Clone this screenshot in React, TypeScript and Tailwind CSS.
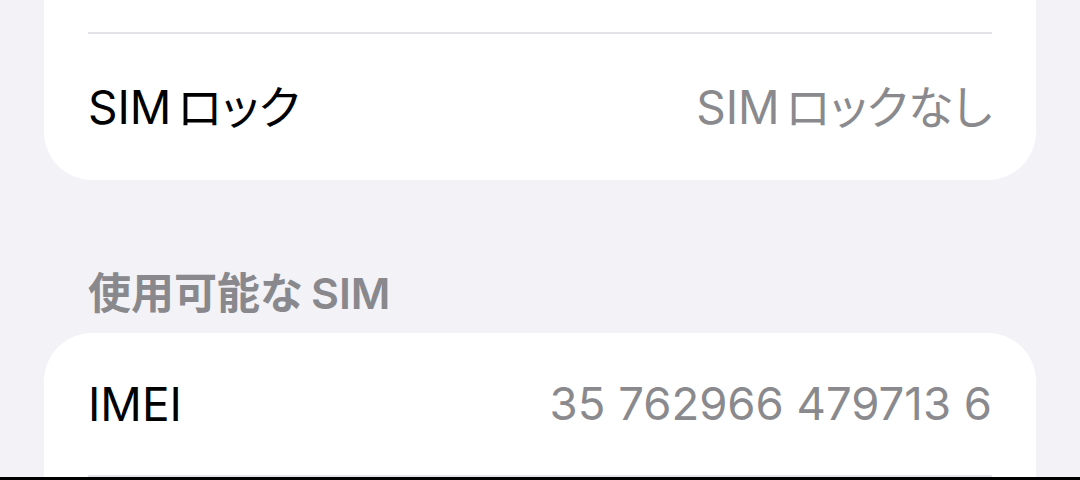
import React from 'react';

const font = { fontFamily: '"Inter", "Noto Sans CJK JP", sans-serif' };

const Row: React.FC<{ label: React.ReactNode; value: React.ReactNode; className?: string }> = ({ label, value, className }) => (
  <div className={`flex items-center justify-between px-[44px] ${className ?? ''}`}>
    <span className="text-[46px] text-black">{label}</span>
    <span className="text-[46px] text-[#8a8a8e]">{value}</span>
  </div>
);

// Japanese run with proportional kana widths, a small gap after the Latin part
const Jp: React.FC<{ children: React.ReactNode }> = ({ children }) => (
  <span className="ml-[6px] [font-feature-settings:'palt']">{children}</span>
);

export default function App() {
  return (
    <div className="w-[1080px] h-[480px] overflow-hidden bg-[#f2f2f7] flex flex-col" style={font}>
      <div className="mx-[44px] bg-white rounded-b-[48px] flex flex-col shrink-0">
        <div className="h-[32px]" />
        <div className="mx-[44px] h-[2px] bg-[#e3e3e8]" />
        <Row
          label={<>SIM<Jp>ロック</Jp></>}
          value={<>SIM<Jp>ロックなし</Jp></>}
          className="h-[146px]"
        />
      </div>
      <div className="h-[153px] shrink-0 flex items-end pl-[88px] pb-[18px]">
        <span className="text-[43px] font-semibold text-[#88888d] leading-none">
          使用可能な<span className="ml-[8px]">SIM</span>
        </span>
      </div>
      <div className="mx-[44px] bg-white rounded-t-[48px] flex flex-col flex-1">
        <Row label="IMEI" value={<span className="text-[45.5px]">35 762966 479713 6</span>} className="h-[142px] shrink-0" />
        <div className="mx-[44px] h-[2px] bg-[#e3e3e8]" />
      </div>
      <div className="h-[3px] bg-black shrink-0" />
    </div>
  );
}
